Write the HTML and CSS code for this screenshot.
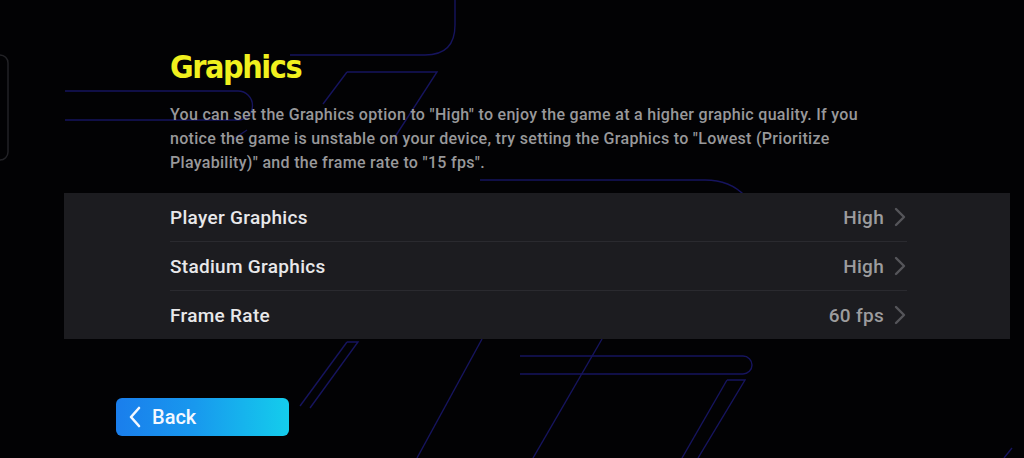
FILE: index.html
```html
<!DOCTYPE html>
<html lang="en">
<head>
<meta charset="utf-8">
<title>Graphics</title>
<link rel="stylesheet" href="styles.css">
</head>
<body>
<div class="screen">
  <svg class="bg-lines" width="1024" height="458" viewBox="0 0 1024 458" aria-hidden="true">
    <g class="blue">
      <path d="M65 91 H238 A14.5 14.5 0 0 1 238 120 H65"/>
      <path d="M232 140 L247 130"/>
      <path d="M290 55 H425 Q455 55 455 25 V0"/>
      <path d="M347 72 H437 L393 140"/>
      <path d="M347 72 L323 104"/>
      <path d="M480 180 H705 Q730 180 745 196"/>
      <path d="M347 342 H358 L310 408"/>
      <path d="M347 342 L300 406"/>
      <path d="M482 339 L417 458"/>
      <path d="M602 339 L533 458"/>
      <path d="M520 356 H743 A9 9 0 0 1 743 374 H520"/>
      <path d="M727 380 H745 L698 458"/>
      <path d="M727 380 L682 458"/>
      <path d="M1012 448 L1004 458"/>
    </g>
    <rect class="edge" x="-12" y="55" width="20" height="105" rx="8"/>
  </svg>

  <main class="content">
    <header class="intro">
      <h1 class="title">Graphics</h1>
      <p class="desc">You can set the Graphics option to "High" to enjoy the game at a higher graphic quality. If you notice the game is unstable on your device, try setting the Graphics to "Lowest (Prioritize Playability)" and the frame rate to "15 fps".</p>
    </header>

    <section class="panel">
      <div class="row">
        <span class="label">Player Graphics</span>
        <span class="value">High</span>
        <svg class="chev" width="14" height="20" viewBox="0 0 14 20"><path d="M3 2 L11 10 L3 18"/></svg>
      </div>
      <div class="row">
        <span class="label">Stadium Graphics</span>
        <span class="value">High</span>
        <svg class="chev" width="14" height="20" viewBox="0 0 14 20"><path d="M3 2 L11 10 L3 18"/></svg>
      </div>
      <div class="row">
        <span class="label">Frame Rate</span>
        <span class="value">60 fps</span>
        <svg class="chev" width="14" height="20" viewBox="0 0 14 20"><path d="M3 2 L11 10 L3 18"/></svg>
      </div>
    </section>

    <div class="footer">
      <button class="back">
        <svg class="back-chev" width="14" height="22" viewBox="0 0 14 22"><path d="M11 2 L3 11 L11 20"/></svg>
        <span>Back</span>
      </button>
    </div>
  </main>
</div>
</body>
</html>
```

FILE: styles.css
```css
* { box-sizing: border-box; }

html, body {
  margin: 0;
  padding: 0;
  background: #000;
}

.screen {
  position: relative;
  width: 1024px;
  height: 458px;
  overflow: hidden;
  background: #020204;
  font-family: Roboto, "Noto Sans", sans-serif;
}

.bg-lines {
  position: absolute;
  left: 0;
  top: 0;
  z-index: 0;
}

.bg-lines .blue path {
  fill: none;
  stroke: #16145e;
  stroke-width: 1.4;
}

.bg-lines .edge {
  fill: none;
  stroke: #222226;
  stroke-width: 1.5;
}

.content {
  position: relative;
  z-index: 1;
  padding: 47px 0 0 64px;
}

.intro {
  padding-left: 106px;
}

.title {
  margin: 0;
  font-family: "DejaVu Sans Condensed", "DejaVu Sans", sans-serif;
  font-stretch: condensed;
  font-weight: 700;
  font-size: 32px;
  line-height: 40px;
  letter-spacing: -1.4px;
  color: #f0f01e;
}

.desc {
  margin: 16px 0 0 0;
  width: 700px;
  font-size: 16px;
  line-height: 24px;
  letter-spacing: 0.3px;
  font-weight: 500;
  color: #98989a;
}

.panel {
  margin-top: 18px;
  width: 946px;
  background: #1c1c20;
  padding: 0 103px 0 106px;
}

.row {
  display: flex;
  align-items: center;
  height: 48px;
}

.row + .row {
  height: 49px;
  border-top: 1px solid #2a2a2f;
}

.label {
  flex: 1;
  font-size: 19px;
  font-weight: 500;
  letter-spacing: 0.3px;
  color: #e8e8ea;
}

.value {
  font-size: 19px;
  font-weight: 500;
  letter-spacing: 0.3px;
  color: #9c9c9e;
  margin-right: 9px;
}

.chev path {
  fill: none;
  stroke: #55555a;
  stroke-width: 2.4;
  stroke-linecap: round;
  stroke-linejoin: round;
}

.footer {
  margin-top: 59px;
  padding-left: 52px;
}

.back {
  display: flex;
  align-items: center;
  gap: 10px;
  width: 173px;
  height: 38px;
  padding: 0 0 0 12px;
  border: none;
  border-radius: 6px;
  background: linear-gradient(90deg, #1a7eec 0%, #1898ee 45%, #14cdec 100%);
  color: #f4f8ff;
  font-family: Roboto, "Noto Sans", sans-serif;
  font-size: 20px;
  font-weight: 500;
  cursor: pointer;
}

.back-chev path {
  fill: none;
  stroke: #f4f8ff;
  stroke-width: 2.6;
  stroke-linecap: round;
  stroke-linejoin: round;
}
```
